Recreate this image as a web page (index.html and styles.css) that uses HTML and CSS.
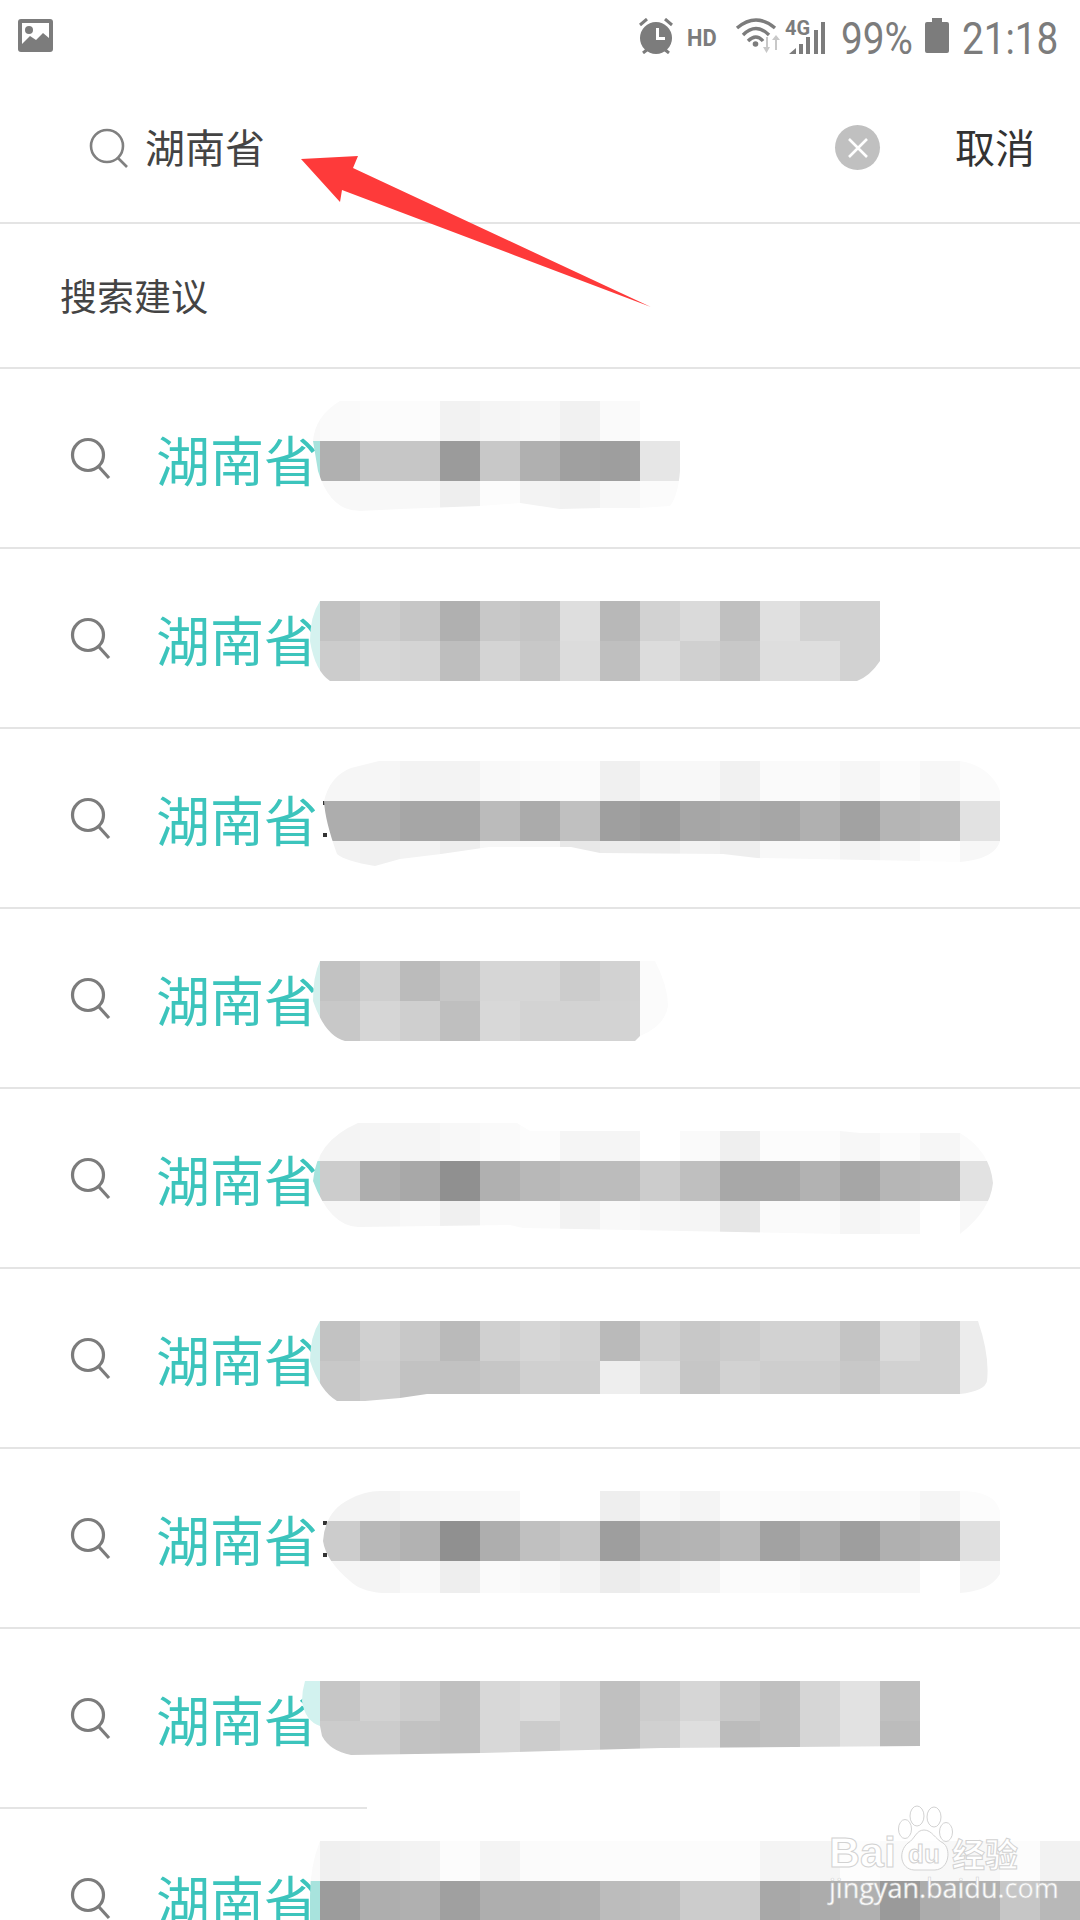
FILE: index.html
```html
<!DOCTYPE html>
<html lang="zh-CN">
<head>
<meta charset="utf-8">
<title>搜索建议</title>
<link rel="stylesheet" href="styles.css">
</head>
<body>
<div class="screen">
  <div class="status">
    <svg class="ico-image" width="35" height="33" viewBox="0 0 35 33"><rect width="35" height="33" rx="3" fill="#7c7c7c"/><path d="M4 4H31V19L25 14L18 21L12 17L4 25Z" fill="#fff"/><circle cx="11" cy="11" r="4" fill="#7c7c7c"/></svg>
    <div class="status-right">
      <svg class="ico-alarm" width="35" height="36" viewBox="0 0 35 36"><circle cx="17" cy="20" r="16" fill="#7c7c7c"/><path d="M1 7L8 1M33 7L26 1M4 35L9 31M30 35L25 31" stroke="#7c7c7c" stroke-width="3" fill="none"/><path d="M18.5 10V20.5H26" stroke="#fff" stroke-width="3" fill="none"/></svg>
      <span class="hd">HD</span>
      <svg class="ico-net" width="90" height="38" viewBox="0 0 90 38">
        <g fill="none" stroke="#7c7c7c" stroke-width="3.4"><path d="M1 11Q20 -5 39 11"/><path d="M7 18Q20 5 33 18"/><path d="M12 24Q20 16 27 24"/></g>
        <circle cx="19.500" cy="27" r="2.800" fill="#7c7c7c"/>
        <path d="M30 20V30H27L30.500 36L34 30H32V20ZM41 33V23H44L40 18L36 23H39V33Z" fill="#c8c8c8"/>
        <text class="net-4g" x="49" y="18">4G</text>
        <path d="M53 37L60 31V37ZM63 27H67V37H63ZM70 20H74V37H70ZM78 13H82V37H78ZM85 5H89V37H85Z" fill="#7c7c7c"/>
      </svg>
      <span class="pct">99%</span>
      <svg class="ico-batt" width="24" height="35" viewBox="0 0 24 35"><path d="M7 0H17V4H22Q24 4 24 6V33Q24 35 22 35H2Q0 35 0 33V6Q0 4 2 4H7Z" fill="#7c7c7c"/></svg>
      <span class="time">21:18</span>
    </div>
  </div>

  <div class="searchbar">
    <svg class="ico-search-top" width="40" height="40" viewBox="0 0 40 40"><circle cx="18" cy="18" r="16" fill="none" stroke="#808080" stroke-width="2.600"/><path d="M29 30L38 39" stroke="#808080" stroke-width="2.600"/></svg>
    <span class="query">湖南省</span>
    <span class="clear"><svg width="24" height="24" viewBox="0 0 24 24"><path d="M3 3L21 21M21 3L3 21" stroke="#fff" stroke-width="2.600"/></svg></span>
    <span class="cancel">取消</span>
  </div>
  <hr class="divider">
  <div class="section">搜索建议</div>
  <hr class="divider">

  <div class="row">
    <svg class="ico-search" width="44" height="44" viewBox="0 0 44 44"><circle cx="20" cy="19" r="15.500" fill="none" stroke="#7c7c7c" stroke-width="3.200"/><path d="M31 31L41 42" stroke="#7c7c7c" stroke-width="3.200"/></svg>
    <span class="hit">湖南省</span>
    <div class="mosaic m1" data-m="0"></div>
  </div>
  <hr class="divider">
  <div class="row">
    <svg class="ico-search" width="44" height="44" viewBox="0 0 44 44"><circle cx="20" cy="19" r="15.500" fill="none" stroke="#7c7c7c" stroke-width="3.200"/><path d="M31 31L41 42" stroke="#7c7c7c" stroke-width="3.200"/></svg>
    <span class="hit">湖南省</span>
    <div class="mosaic m2" data-m="1"></div>
  </div>
  <hr class="divider">
  <div class="row">
    <svg class="ico-search" width="44" height="44" viewBox="0 0 44 44"><circle cx="20" cy="19" r="15.500" fill="none" stroke="#7c7c7c" stroke-width="3.200"/><path d="M31 31L41 42" stroke="#7c7c7c" stroke-width="3.200"/></svg>
    <span class="hit">湖南省</span>
    <span class="sliver"></span>
    <div class="mosaic m3" data-m="2"></div>
  </div>
  <hr class="divider">
  <div class="row">
    <svg class="ico-search" width="44" height="44" viewBox="0 0 44 44"><circle cx="20" cy="19" r="15.500" fill="none" stroke="#7c7c7c" stroke-width="3.200"/><path d="M31 31L41 42" stroke="#7c7c7c" stroke-width="3.200"/></svg>
    <span class="hit">湖南省</span>
    <div class="mosaic m4" data-m="3"></div>
  </div>
  <hr class="divider">
  <div class="row">
    <svg class="ico-search" width="44" height="44" viewBox="0 0 44 44"><circle cx="20" cy="19" r="15.500" fill="none" stroke="#7c7c7c" stroke-width="3.200"/><path d="M31 31L41 42" stroke="#7c7c7c" stroke-width="3.200"/></svg>
    <span class="hit">湖南省</span>
    <div class="mosaic m5" data-m="4"></div>
  </div>
  <hr class="divider">
  <div class="row">
    <svg class="ico-search" width="44" height="44" viewBox="0 0 44 44"><circle cx="20" cy="19" r="15.500" fill="none" stroke="#7c7c7c" stroke-width="3.200"/><path d="M31 31L41 42" stroke="#7c7c7c" stroke-width="3.200"/></svg>
    <span class="hit">湖南省</span>
    <div class="mosaic m6" data-m="5"></div>
  </div>
  <hr class="divider">
  <div class="row">
    <svg class="ico-search" width="44" height="44" viewBox="0 0 44 44"><circle cx="20" cy="19" r="15.500" fill="none" stroke="#7c7c7c" stroke-width="3.200"/><path d="M31 31L41 42" stroke="#7c7c7c" stroke-width="3.200"/></svg>
    <span class="hit">湖南省</span>
    <span class="sliver"></span>
    <div class="mosaic m7" data-m="6"></div>
  </div>
  <hr class="divider">
  <div class="row">
    <svg class="ico-search" width="44" height="44" viewBox="0 0 44 44"><circle cx="20" cy="19" r="15.500" fill="none" stroke="#7c7c7c" stroke-width="3.200"/><path d="M31 31L41 42" stroke="#7c7c7c" stroke-width="3.200"/></svg>
    <span class="hit">湖南省</span>
    <div class="mosaic m8" data-m="7"></div>
  </div>
  <hr class="divider divider-short">
  <div class="row">
    <svg class="ico-search" width="44" height="44" viewBox="0 0 44 44"><circle cx="20" cy="19" r="15.500" fill="none" stroke="#7c7c7c" stroke-width="3.200"/><path d="M31 31L41 42" stroke="#7c7c7c" stroke-width="3.200"/></svg>
    <span class="hit">湖南省</span>
    <div class="mosaic m9" data-m="8"></div>
  </div>

  <svg class="arrow" width="360" height="160" viewBox="0 0 360 160"><path d="M1 9L58 6L53 18L351 157L42 40L40 52Z" fill="#fe3a3a"/></svg>

  <div class="watermark">
    <div class="wm-top">
      <span class="wm-bai">Bai</span>
      <svg class="wm-paw" width="56" height="68" viewBox="0 0 56 68">
        <g fill="#fff" fill-opacity=".75" stroke="#d2d2d2" stroke-width="1">
          <ellipse cx="8" cy="24" rx="6.500" ry="9.500"/><ellipse cx="20" cy="11" rx="7" ry="10"/><ellipse cx="37" cy="12" rx="7" ry="10"/><ellipse cx="49" cy="27" rx="6.500" ry="9.500"/>
          <path d="M27 25C35 25 38 34 46 38C54 43 53 64 38 65H17C3 64 1 46 11 38C18 34 19 25 27 25Z"/>
        </g>
        <text class="wm-du" x="11" y="58">du</text>
      </svg>
      <span class="wm-cn">经验</span>
    </div>
    <div class="wm-url">jingyan.baidu.com</div>
  </div>
</div>
<script src="mosaic.js"></script>
</body>
</html>
```
FILE: styles.css
```css
* { box-sizing: border-box; }
html, body { margin: 0; padding: 0; background: #fff; }
body { width: 1080px; height: 1920px; overflow: hidden; font-family: "Noto Sans CJK SC", "Noto Sans", sans-serif; }
.screen { position: relative; width: 1080px; height: 1920px; overflow: hidden; background: #fff; }

.status { height: 70px; display: flex; align-items: flex-start; justify-content: space-between; padding: 18px 23px 0 18px; color: #7c7c7c; }
.ico-image { margin-top: 1px; }
.status-right { display: flex; align-items: flex-start; }
.hd { font: 700 23px/24px Roboto, sans-serif; margin: 9px 0 0 13px; width: 30px; transform: scaleX(.95); transform-origin: left; }
.ico-net { margin: -1px 0 0 19px; overflow: visible; }
.net-4g { font: 700 20px Roboto, sans-serif; fill: #7c7c7c; }
.pct, .time { font: 400 45px/44px Roboto, sans-serif; transform-origin: left; display: block; white-space: nowrap; margin-top: -1px; }
.pct { width: 70px; margin-left: 15px; transform: scaleX(.86); }
.ico-batt { margin-left: 14px; }
.time { width: 95px; margin-left: 13px; transform: scaleX(.86); }

.searchbar { height: 152px; display: flex; align-items: center; padding: 3px 0 0 89px; }
.query { font-size: 40px; line-height: 56px; color: #444; margin: -4px 0 0 16px; flex: 1; }
.clear { width: 45px; height: 45px; border-radius: 50%; background: #c0c0c0; display: flex; align-items: center; justify-content: center; }
.cancel { font-size: 40px; line-height: 56px; color: #333; margin: -4px 45px 0 75px; }

.divider { display: block; margin: 0; border: 0; height: 2px; background: #e4e4e4; }
.divider-short { width: 367px; }

.section { height: 143px; display: flex; align-items: center; padding: 0 0 1px 60px; font-size: 37px; color: #444; }

.row { position: relative; height: 178px; display: flex; align-items: center; padding: 0 0 0 68px; }
.ico-search { flex: none; }
.hit { margin-left: 44px; font-size: 54px; line-height: 70px; color: #3cc4bc; white-space: nowrap; position: relative; top: 1px; }

.mosaic { position: absolute; left: 300px; top: 32px; width: 780px; }
.mband { display: flex; height: 40px; }
.mcell { flex: 0 0 40px; height: 40px; }
.mcell:first-child { flex-basis: 20px; }

.mosaic.m2, .mosaic.m4, .mosaic.m6, .mosaic.m8 { top: 52px; }
.m1 { clip-path: path("M40 0H340V40H380V70Q378 95 370 105L340 107H300L260 108L220 102L180 105L100 108L60 110Q30 110 18 70L13 40Q15 15 40 0Z"); }
.m2 { clip-path: path("M20 0H580V60Q570 75 557 80H30Q15 70 10 40Q10 15 20 0Z"); }
.m3 { clip-path: path("M79 0H660Q690 5 700 30V80Q695 98 660 101L620 100L457 97L423 93L300 92L271 86L189 86L141 93L100 98L75 105Q45 100 37 93Q25 60 24 40Q30 15 51 7Z"); }
.m4 { clip-path: path("M20 0H355Q368 25 368 45Q365 65 340 75L335 80H45Q25 75 13 40Q13 15 20 0Z"); }
.m5 { clip-path: path("M58 2H217L230 10H540L560 12H660Q690 30 693 62Q690 90 660 113L540 113L223 107L210 104L58 106Q30 105 13 60Q16 20 58 2Z"); }
.m6 { clip-path: path("M20 0H678Q690 35 687 60Q685 70 660 73H127L100 77L65 80H37Q20 70 10 40Q10 15 20 0Z"); }
.m7 { clip-path: path("M80 10H660Q695 10 700 30V93Q690 110 660 112H82Q60 110 50 100Q26 80 23 60Q25 30 50 18Q65 10 80 10Z"); }
.m8 { clip-path: path("M5 0H620V65L361 67L251 70L182 72L51 74Q30 70 22 55L20 45Q5 40 2 20Q2 10 5 0Z"); }
.m9 { clip-path: path("M20 0H780V80H10V55Q10 25 20 0Z"); }

.sliver { position: absolute; left: 323px; top: 72px; width: 4px; height: 36px; border-top: 4px solid #333; border-bottom: 4px solid #333; }

.arrow { position: absolute; left: 300px; top: 150px; }

.watermark { position: absolute; left: 829px; top: 1805px; width: 196px; color: #fff; }
.wm-top { display: flex; align-items: flex-end; height: 68px; }
.wm-bai { font: 700 43px/42px "Liberation Sans", sans-serif; -webkit-text-stroke: 1px #d2d2d2; width: 70px; margin-right: -4px; }
.wm-paw { flex: none; margin-left: 2px; }
.wm-du { font: 700 26px "Liberation Sans", sans-serif; fill: #fff; stroke: #d2d2d2; stroke-width: 1px; }
.wm-cn { font-size: 33px; line-height: 40px; font-weight: 700; white-space: nowrap; -webkit-text-stroke: 1px #d2d2d2; margin-left: -1px; }
.wm-url { font: 400 27px/30px "Open Sans", sans-serif; -webkit-text-stroke: .6px #d2d2d2; white-space: nowrap; }
```
FILE: mosaic.js
```js
var MOSAICS = [
  [["f8f8f8","fa","fc","fc","f2","f5","f7","f1","fa","fff","fff"],
   ["a8e3dd","b0","c6","c6","9b","c8","b0","a0","9e","e6"],
   ["f8f8f8","f8","f8","f8","ee","fc","f3","f1","f7","fb"]],
  [["d5f2ef","c2","cc","c6","b0","c8","c4","de","b8","d2","da","c0","e0","d2","d2"],
   ["d5f2ef","cc","d6","d4","be","d4","c8","dc","bf","dc","d0","c8","de","de","d2"]],
  [["fff","f6","f6","f3","f3","f9","fa","fb","f0","f8","f8","f1","fa","fa","f6","fb","f7","fb"],
   ["fff","ad","ac","a6","a6","bb","ab","c0","9f","9b","a6","a9","a6","b0","a2","b5","b8","e2"],
   ["fff","f2","f0","f3","ee","f7","f7","e8","ec","ec","f2","ee","f8","f8","f3","f7","fd","f7"]],
  [["d5f0ed","c2","ce","bb","c6","d6","d6","cc","d2","fb"],
   ["d5f0ed","c8","d6","cf","bf","d8","d3","d3","d3","fb"]],
  [["f5faf9","f4","f5","f5","f8","fa","fc","f5","f5","ff","fa","ef","fc","fc","f7","fb","f6","fb"],
   ["a8e3dd","cc","ae","a8","90","b0","b8","bc","bc","cc","bf","a8","a8","b2","a6","b6","b8","e2"],
   ["f5faf9","f6","f5","f8","f0","fa","fa","f2","f9","f6","f5","e6","fa","fa","f5","f8","ff","f8"]],
  [["d0f0ed","c2","d0","c8","ba","d0","d6","d2","ba","d0","c8","cc","d2","d2","c4","da","d2","ec"],
   ["d0f0ed","c8","ce","c2","c2","c6","d0","d0","ee","dc","c6","d2","ce","ce","c8","d2","d2","ec"]],
  [["fff","f3","f3","f7","f8","f9","ff","ff","ee","f8","f4","fc","fb","fa","fb","fa","f5","fc"],
   ["fff","cc","b8","b2","90","ae","c0","c6","9e","b2","b4","ba","a2","ac","9e","b0","b4","e0"],
   ["fff","f5","f4","f9","ee","fa","f8","f3","ec","f0","f4","fb","fb","f8","f7","f7","ff","f6"]],
  [["d2f2ef","c6","d2","cc","c0","d8","dc","d4","c0","cc","d6","c8","c0","d6","e2","c0"],
   ["d2f2ef","cc","cc","c2","c0","d8","cc","d4","c0","d0","de","bc","c0","d6","e2","bc"]],
  [["fafafa","f0","f2","f3","fc","f4","fb","fc","fc","fc","fc","fc","f4","f5","fd","fa","f8","f8","fc","f2"],
   ["a8e3dd","9c","ae","b0","a0","ae","ae","b0","bc","be","cc","cc","a8","ac","b0","9a","ac","b0","c6","b8"]]
];

function toColor(v) {
  return "#" + (v.length === 2 ? v + v + v : v);
}

document.querySelectorAll(".mosaic").forEach(function (el) {
  MOSAICS[+el.dataset.m].forEach(function (band) {
    var row = document.createElement("div");
    row.className = "mband";
    band.forEach(function (v) {
      var cell = document.createElement("div");
      cell.className = "mcell";
      cell.style.background = toColor(v);
      row.appendChild(cell);
    });
    el.appendChild(row);
  });
});
```
